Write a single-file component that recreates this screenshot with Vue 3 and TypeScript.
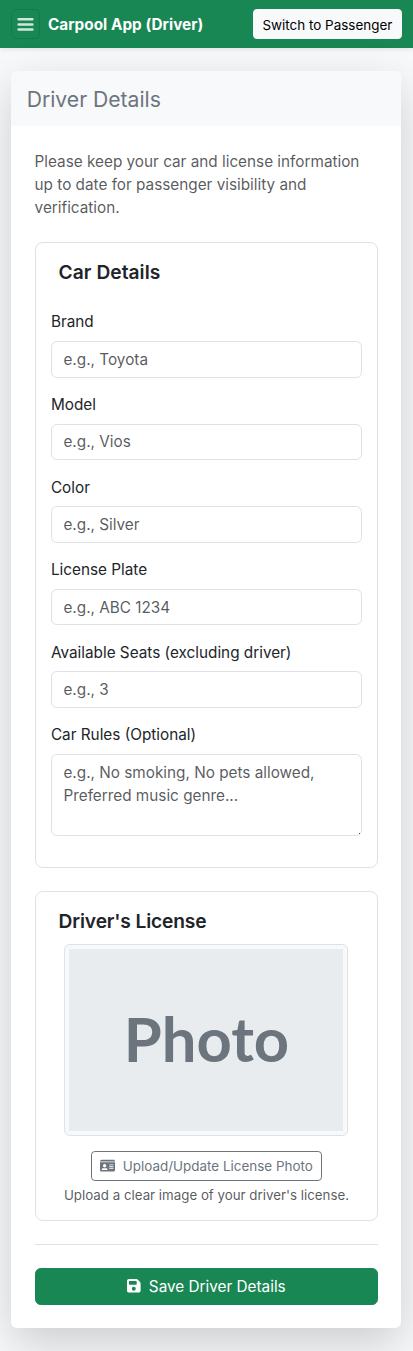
<script setup lang="ts">
interface Field {
  id: string
  label: string
  placeholder: string
}

const fields: Field[] = [
  { id: 'brand', label: 'Brand', placeholder: 'e.g., Toyota' },
  { id: 'model', label: 'Model', placeholder: 'e.g., Vios' },
  { id: 'color', label: 'Color', placeholder: 'e.g., Silver' },
  { id: 'plate', label: 'License Plate', placeholder: 'e.g., ABC 1234' },
  { id: 'seats', label: 'Available Seats (excluding driver)', placeholder: 'e.g., 3' },
]
</script>

<template>
  <div class="page">
    <header class="topbar">
      <button class="menu" aria-label="Menu">
        <svg viewBox="0 0 19 17" fill="none" stroke="#fff" stroke-opacity=".8" stroke-width="2.5" stroke-linecap="round">
          <path d="M2.6 3.2h13.8M2.6 8.5h13.8M2.6 13.6h13.8" />
        </svg>
      </button>
      <span class="brand">Carpool App (Driver)</span>
      <button class="switch">Switch to Passenger</button>
    </header>

    <main class="card">
      <h1 class="card-header">Driver Details</h1>
      <div class="card-body">
        <p class="intro">Please keep your car and license information up to date for passenger visibility and verification.</p>

        <section class="panel car">
          <h2>Car Details</h2>
          <div v-for="field in fields" :key="field.id" class="field">
            <label :for="field.id">{{ field.label }}</label>
            <input :id="field.id" type="text" :placeholder="field.placeholder" />
          </div>
          <div class="field rules">
            <label for="rules">Car Rules (Optional)</label>
            <textarea id="rules" placeholder="e.g., No smoking, No pets allowed, Preferred music genre..."></textarea>
          </div>
        </section>

        <section class="panel license">
          <h2>Driver's License</h2>
          <div class="frame"><div class="photo">Photo</div></div>
          <button class="upload">
            <svg viewBox="0 0 576 512" fill="currentColor">
              <path fill-rule="evenodd" d="M0 96c0-35 29-64 64-64h448c35 0 64 29 64 64H0zm0 32h576v288c0 35-29 64-64 64H64c-35 0-64-29-64-64V128zm64 277c0 6 5 11 11 11h202c6 0 11-5 11-11 0-29-24-53-53-53H117c-29 0-53 24-53 53zm112-85a64 64 0 1 0 0-128 64 64 0 1 0 0 128zm176-112v32h160v-32H352zm0 64v32h160v-32H352zm0 64v32h160v-32H352z" />
            </svg>
            <span>Upload/Update License Photo</span>
          </button>
          <p class="hint">Upload a clear image of your driver's license.</p>
        </section>

        <hr />

        <button class="save">
          <svg viewBox="0 0 448 448" fill="currentColor">
            <path fill-rule="evenodd" d="M64 0C29 0 0 29 0 64v320c0 35 29 64 64 64h320c35 0 64-29 64-64V141c0-17-7-33-19-45l-77-77C340 7 324 0 307 0H64zm0 96c0-18 14-32 32-32h192c18 0 32 14 32 32v64c0 18-14 32-32 32H96c-18 0-32-14-32-32V96zm160 160a64 64 0 1 1 0 128 64 64 0 1 1 0-128z" />
          </svg>
          <span>Save Driver Details</span>
        </button>
      </div>
    </main>
  </div>
</template>

<style>
html {
  font-size: 15.36px;
}
body {
  background: #f8f9fa;
  overflow-x: hidden;
}
</style>

<style scoped>
* {
  box-sizing: border-box;
}
.page {
  min-height: 1351px;
  overflow: hidden;
  background: #f8f9fa;
  color: #212529;
  font: 400 15.3px/23.04px Inter, "Noto Sans", sans-serif;
}
button,
input,
textarea {
  font: inherit;
  margin: 0;
}
.topbar {
  height: 48px;
  padding: 0 11.4px;
  display: flex;
  align-items: center;
  background: #198754;
  box-shadow: 0 2px 4px rgba(0, 0, 0, 0.075);
}
.menu {
  width: 28.5px;
  height: 30px;
  padding: 0;
  display: grid;
  place-items: center;
  background: none;
  border: 1px solid rgba(0, 0, 0, 0.1);
  border-radius: 5.75px;
}
.menu svg {
  width: 19px;
  height: 17px;
}
.brand {
  margin-left: 8px;
  padding-top: 2px;
  color: #fff;
  font-weight: 700;
  letter-spacing: 0.04px;
}
.switch {
  margin-left: auto;
  height: 30px;
  width: 148.5px;
  padding: 2px 0 0;
  font-size: 13.44px;
  line-height: 20px;
  white-space: nowrap;
  color: #000;
  background: #f8f9fa;
  border: 1px solid #f8f9fa;
  border-radius: 3.84px;
}
.card {
  margin: 23px 11.6px 23px 11.4px;
  background: #fff;
  border-radius: 5.76px;
  box-shadow: 0 15.36px 46px rgba(0, 0, 0, 0.175);
}
.card-header {
  margin: 0;
  height: 55.4px;
  padding: 2px 15.36px 0;
  display: flex;
  align-items: center;
  background: #f8f9fa;
  border-radius: 5.76px 5.76px 0 0;
  color: #6c757d;
  font-size: 21.12px;
  font-weight: 400;
}
.card-body {
  padding: 23.2px 23.04px 23.04px 23.2px;
}
.intro {
  margin: 0 0 22.4px;
  padding-top: 0.5px;
  color: rgba(33, 37, 41, 0.75);
}
.panel {
  border: 1px solid #dee2e6;
  border-radius: 7.68px;
  margin-bottom: 23.04px;
  padding: 0 15.36px 15.36px;
}
.panel h2 {
  margin: 0 7.68px;
  font-size: 19.2px;
  line-height: 23.04px;
  font-weight: 600;
}
.car h2 {
  padding-top: 18.5px;
  margin-bottom: 26.1px;
  letter-spacing: 0.04px;
}
.field {
  margin-bottom: 15.36px;
}
.field label {
  display: block;
  margin-bottom: 7.68px;
}
.field input,
.field textarea {
  display: block;
  width: 100%;
  height: 36.56px;
  padding: 5.76px 11.52px;
  color: #212529;
  background: #fff;
  border: 1px solid #dee2e6;
  border-radius: 5.76px;
  outline: 0;
}
.field textarea {
  height: 82.3px;
  padding-top: 6.3px;
  resize: none;
}
.rules {
  position: relative;
}
.rules::after {
  content: "";
  position: absolute;
  right: 2px;
  bottom: 2px;
  width: 1px;
  height: 1px;
  background: #444;
}
.field ::placeholder {
  color: rgba(33, 37, 41, 0.75);
  opacity: 1;
}
.car {
  height: 626.2px;
}
.license {
  height: 330px;
  display: flex;
  flex-direction: column;
  align-items: center;
}
.license h2 {
  align-self: flex-start;
  padding-top: 18.5px;
  margin-bottom: 10.5px;
  letter-spacing: -0.14px;
}
.frame {
  width: 284px;
  height: 192px;
  flex: none;
  padding: 4px;
  border: 1px solid #dee2e6;
  border-radius: 5.76px;
  background: #f8f9fa;
}
.photo {
  height: 100%;
  padding-bottom: 2px;
  display: grid;
  place-items: center;
  background: #e9ecef;
  color: #6c757d;
  font-family: Lato, sans-serif;
  font-size: 61.5px;
  line-height: 1;
  font-weight: 700;
}
.upload {
  margin-top: 15px;
  width: 231px;
  height: 30px;
  flex: none;
  padding: 0;
  display: flex;
  align-items: center;
  justify-content: center;
  gap: 7.5px;
  color: #6c757d;
  background: transparent;
  border: 1px solid #6c757d;
  border-radius: 3.84px;
  font-size: 13.44px;
  white-space: nowrap;
}
.upload span {
  padding-top: 1px;
}
.upload svg {
  width: 15.1px;
  height: 13.44px;
  flex: none;
}
.hint {
  margin: 3.4px 0 0;
  font-size: 13.32px;
  color: rgba(33, 37, 41, 0.75);
  white-space: nowrap;
}
hr {
  margin: 0 0 23.04px;
  border: 0;
  border-top: 1px solid #dee2e6;
}
.save {
  width: 100%;
  height: 36.8px;
  padding: 0;
  display: flex;
  align-items: center;
  justify-content: center;
  gap: 8px;
  color: #fff;
  background: #198754;
  border: 1px solid #198754;
  border-radius: 5.76px;
}
.save svg {
  width: 13.6px;
  height: 13.6px;
}
</style>
